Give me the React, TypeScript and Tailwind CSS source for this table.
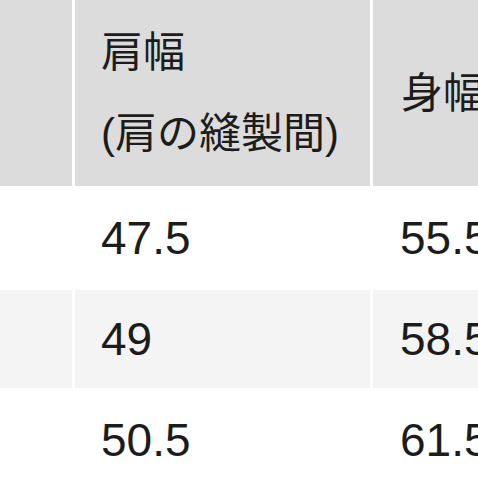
const rows = [
  { shoulder: "47.5", body: "55.5", shade: false },
  { shoulder: "49", body: "58.5", shade: true },
  { shoulder: "50.5", body: "61.5", shade: false },
];

const font = { fontFamily: '"Liberation Sans", "Noto Sans CJK JP", sans-serif' };

export default function App() {
  return (
    <div className="h-[478px] w-[478px] overflow-hidden bg-white text-[#1c1c1c]" style={font}>
      <div className="grid w-[700px] grid-cols-[72px_295px_330px] grid-rows-[186px_98px_98px_98px] gap-x-[3px] gap-y-[3px]">
        {/* header */}
        <div className="bg-[#dcdcdc]" />
        <div className="flex flex-col justify-center bg-[#dcdcdc] pl-[26px] text-[42px] leading-[81px]">
          <span>肩幅</span>
          <span>(肩の縫製間)</span>
        </div>
        <div className="flex items-center bg-[#dcdcdc] pl-[28px] text-[42px]">身幅</div>

        {rows.map((r) => (
          <div key={r.shoulder} className="contents">
            <div className={r.shade ? "bg-[#f4f4f4]" : "bg-white"} />
            <div className={`flex items-center pl-[26px] text-[46px] ${r.shade ? "bg-[#f4f4f4]" : "bg-white"}`}>
              {r.shoulder}
            </div>
            <div className={`flex items-center pl-[27px] text-[46px] ${r.shade ? "bg-[#f4f4f4]" : "bg-white"}`}>
              {r.body}
            </div>
          </div>
        ))}
      </div>
    </div>
  );
}
